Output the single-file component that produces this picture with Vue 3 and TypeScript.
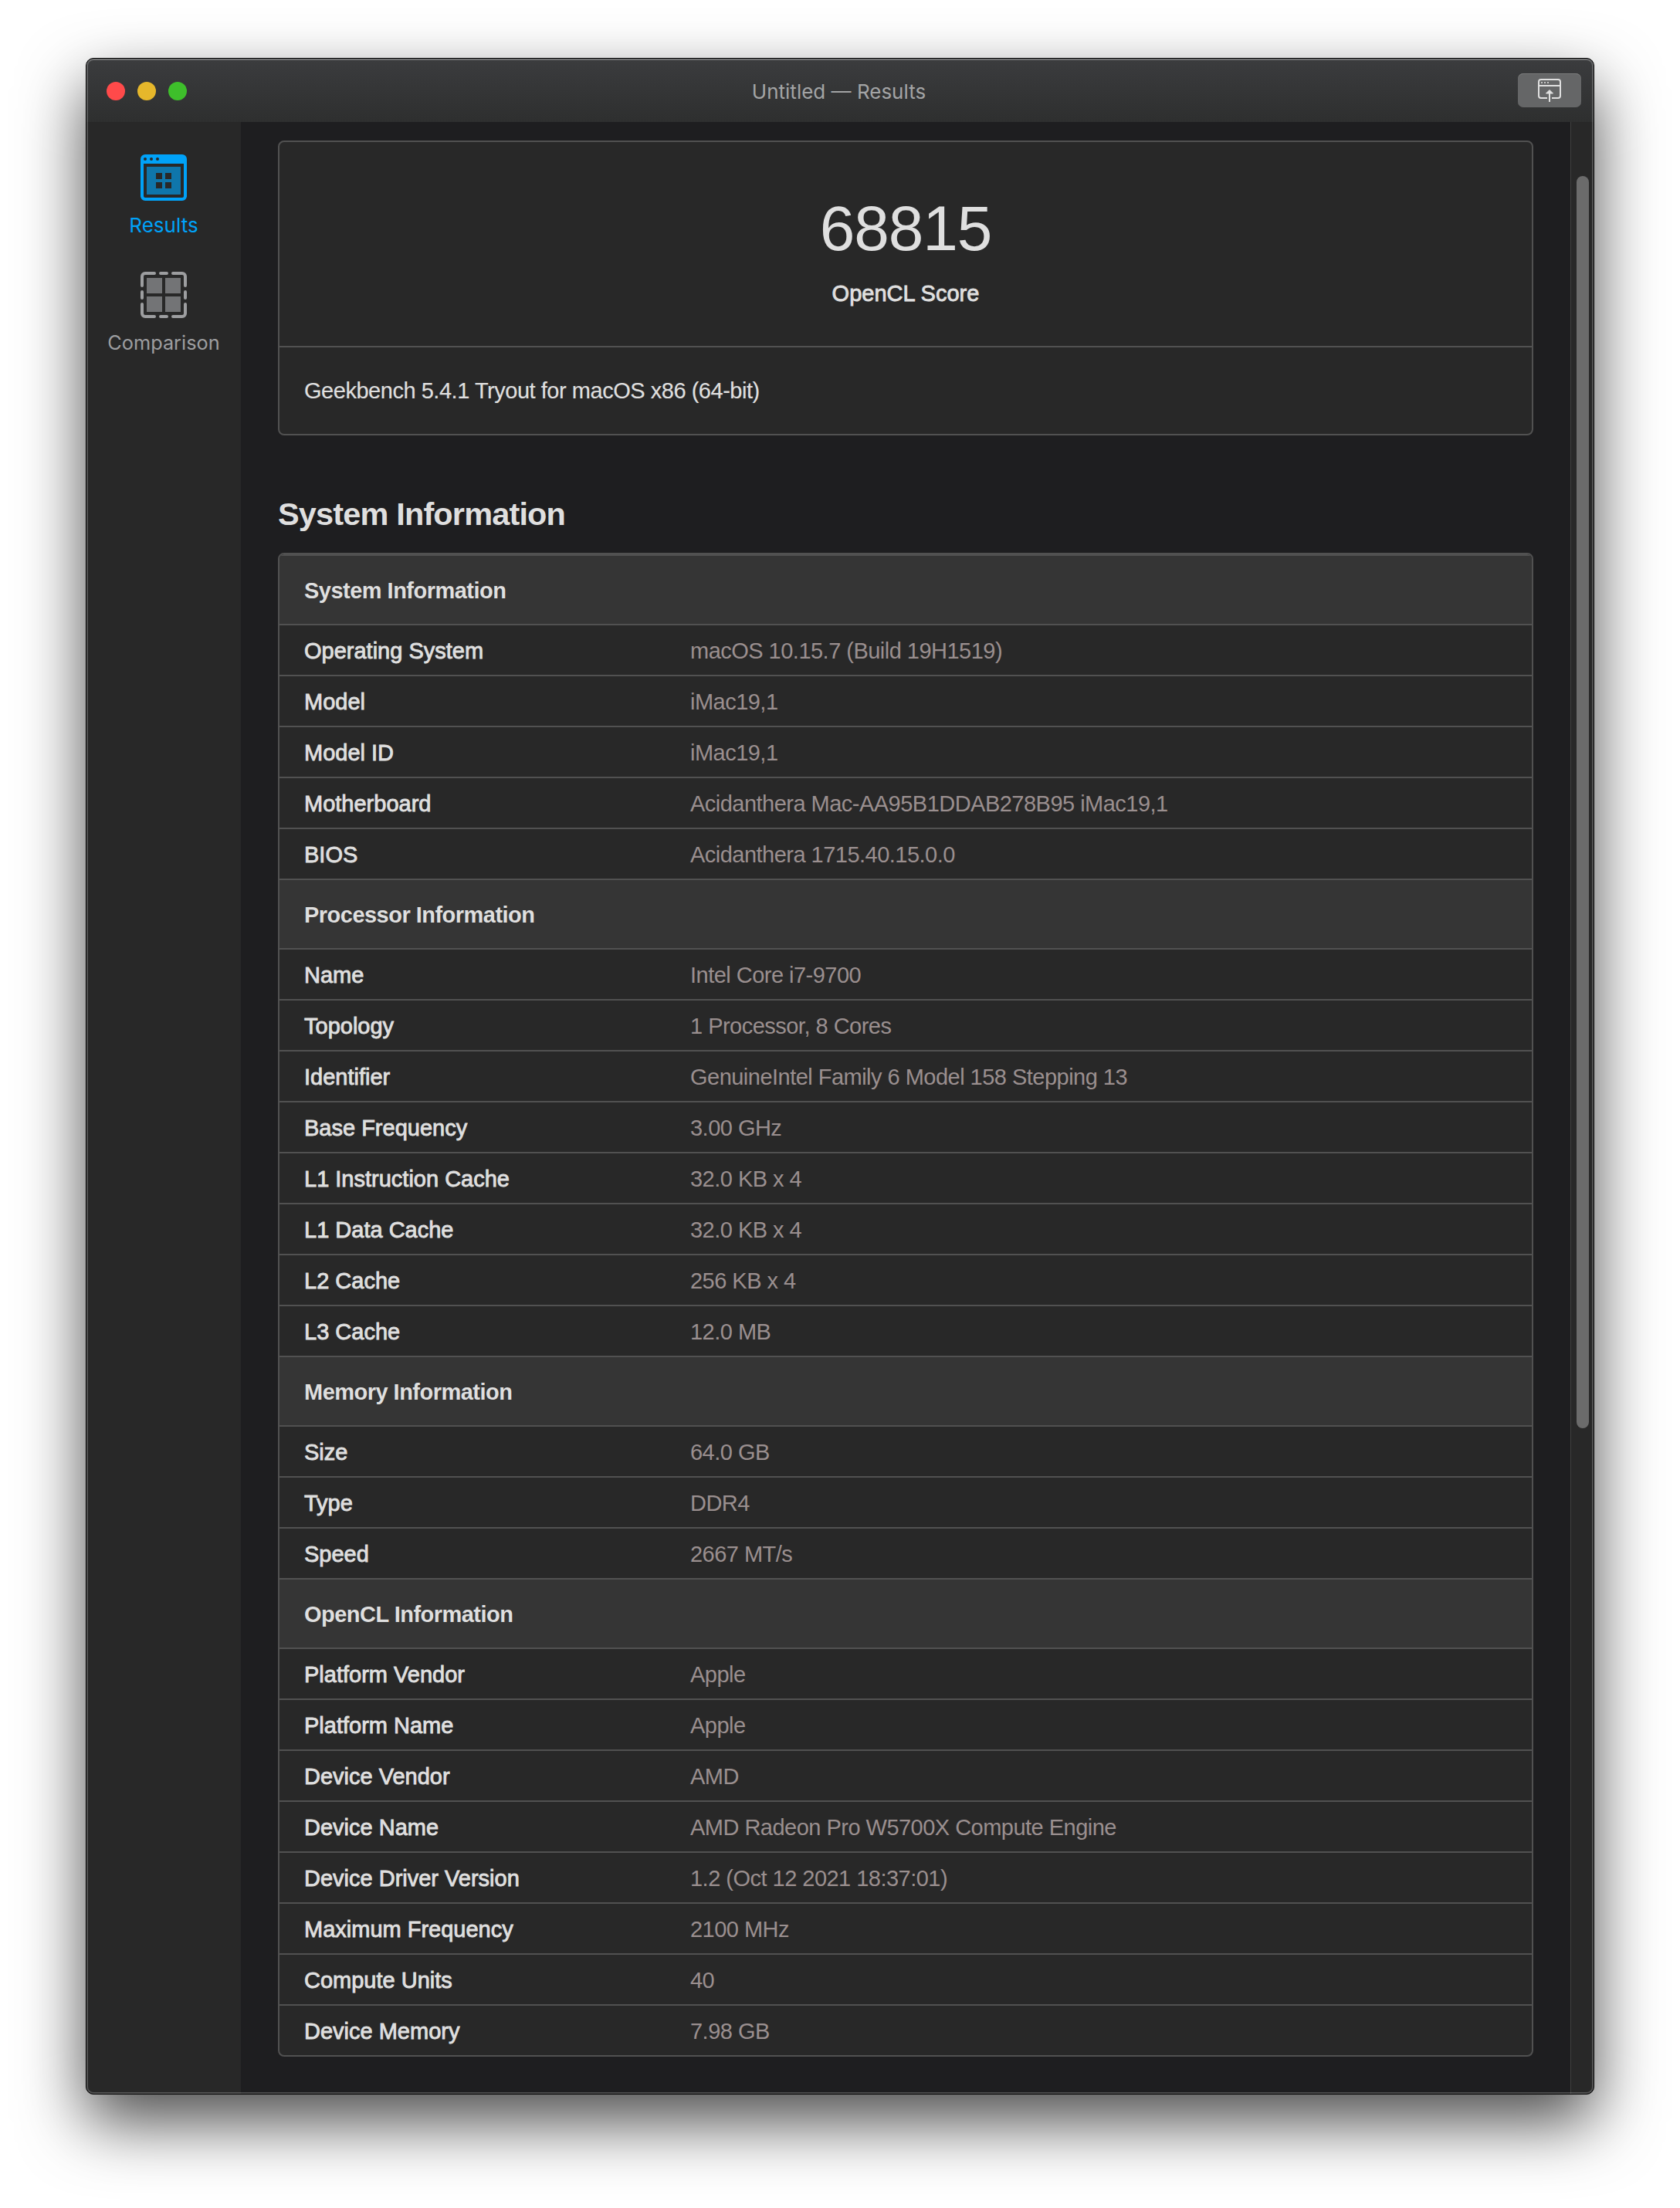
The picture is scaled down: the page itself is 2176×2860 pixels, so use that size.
<script setup lang="ts">
interface Row { label: string; value: string }
interface Group { title: string; rows: Row[] }

const groups: Group[] = [
  {
    title: 'System Information',
    rows: [
      { label: 'Operating System', value: 'macOS 10.15.7 (Build 19H1519)' },
      { label: 'Model', value: 'iMac19,1' },
      { label: 'Model ID', value: 'iMac19,1' },
      { label: 'Motherboard', value: 'Acidanthera Mac-AA95B1DDAB278B95 iMac19,1' },
      { label: 'BIOS', value: 'Acidanthera 1715.40.15.0.0' },
    ],
  },
  {
    title: 'Processor Information',
    rows: [
      { label: 'Name', value: 'Intel Core i7-9700' },
      { label: 'Topology', value: '1 Processor, 8 Cores' },
      { label: 'Identifier', value: 'GenuineIntel Family 6 Model 158 Stepping 13' },
      { label: 'Base Frequency', value: '3.00 GHz' },
      { label: 'L1 Instruction Cache', value: '32.0 KB x 4' },
      { label: 'L1 Data Cache', value: '32.0 KB x 4' },
      { label: 'L2 Cache', value: '256 KB x 4' },
      { label: 'L3 Cache', value: '12.0 MB' },
    ],
  },
  {
    title: 'Memory Information',
    rows: [
      { label: 'Size', value: '64.0 GB' },
      { label: 'Type', value: 'DDR4' },
      { label: 'Speed', value: '2667 MT/s' },
    ],
  },
  {
    title: 'OpenCL Information',
    rows: [
      { label: 'Platform Vendor', value: 'Apple' },
      { label: 'Platform Name', value: 'Apple' },
      { label: 'Device Vendor', value: 'AMD' },
      { label: 'Device Name', value: 'AMD Radeon Pro W5700X Compute Engine' },
      { label: 'Device Driver Version', value: '1.2 (Oct 12 2021 18:37:01)' },
      { label: 'Maximum Frequency', value: '2100 MHz' },
      { label: 'Compute Units', value: '40' },
      { label: 'Device Memory', value: '7.98 GB' },
    ],
  },
]
</script>

<template>
  <div class="desktop">
    <div class="window">
      <header class="titlebar">
        <div class="lights">
          <span class="light close"></span>
          <span class="light minimize"></span>
          <span class="light zoom"></span>
        </div>
        <div class="title">Untitled — Results</div>
        <div class="actions">
          <button class="share" type="button" aria-label="Upload">
            <svg width="30" height="30" viewBox="0 0 30 30" fill="none">
              <path d="M12 25H4a3 3 0 0 1-3-3V4a3 3 0 0 1 3-3h22a3 3 0 0 1 3 3v18a3 3 0 0 1-3 3h-8" stroke="#e0e0e0" stroke-width="2" />
              <path d="M1 9h28M15 18v12" stroke="#e0e0e0" stroke-width="2" />
              <path d="M4 4h2v2H4zM8 4h2v2H8zM12 4h2v2h-2z" fill="#c4c4c4" />
              <path d="M15 14.500l4.500 4.500h-9z" fill="#e0e0e0" stroke="#e0e0e0" stroke-width="1" stroke-linejoin="round" />
            </svg>
          </button>
        </div>
      </header>

      <div class="body">
        <nav class="sidebar">
          <a class="tab active">
            <svg width="60" height="60" viewBox="0 0 60 60">
              <path fill="#00a2f8" fill-rule="evenodd" d="M6 0h48a6 6 0 0 1 6 6v48a6 6 0 0 1-6 6H6a6 6 0 0 1-6-6V6a6 6 0 0 1 6-6zM4 12v42a2 2 0 0 0 2 2h48a2 2 0 0 0 2-2V12z" />
              <g fill="#282828">
                <circle cx="6" cy="6" r="2" /><circle cx="14" cy="6" r="2" /><circle cx="22" cy="6" r="2" />
              </g>
              <path fill="#0f76ab" fill-rule="evenodd" d="M8 16h44v36H8zM20 24v8h8v-8zM32 24v8h8v-8zM20 36v8h8v-8zM32 36v8h8v-8z" />
            </svg>
            <span class="tab-label results">Results</span>
          </a>
          <a class="tab">
            <svg width="60" height="60" viewBox="0 0 60 60">
              <path fill="none" stroke="#9d9ea0" stroke-width="4" stroke-linecap="round" d="M2 18V6a4 4 0 0 1 4-4h12M26 2h8M42 2h12a4 4 0 0 1 4 4v12M58 26v8M58 42v12a4 4 0 0 1-4 4H42M34 58h-8M18 58H6a4 4 0 0 1-4-4V42M2 34v-8" />
              <path fill="#737476" d="M8 8h20v20H8zM32 8h20v20H32zM8 32h20v20H8zM32 32h20v20H32z" />
            </svg>
            <span class="tab-label">Comparison</span>
          </a>
        </nav>

        <main class="content">
          <section class="card">
            <div class="score">
              <div class="score-value">68815</div>
              <div class="score-label">OpenCL Score</div>
            </div>
            <div class="version">Geekbench 5.4.1 Tryout for macOS x86 (64-bit)</div>
          </section>

          <h2 class="heading">System Information</h2>

          <section class="card">
            <template v-for="group in groups" :key="group.title">
              <div class="group">{{ group.title }}</div>
              <div v-for="row in group.rows" :key="row.label" class="row">
                <span class="label">{{ row.label }}</span>
                <span class="value">{{ row.value }}</span>
              </div>
            </template>
          </section>
        </main>

        <div class="scrollbar"><div class="thumb"></div></div>
      </div>
    </div>
  </div>
</template>

<style>
body {
  background: #fff;
}
</style>

<style scoped>
.desktop {
  box-sizing: border-box;
  width: 2176px;
  height: 2860px;
  padding: 75px 111px 147px;
  overflow: hidden;
  background: #fff;
  font-family: "Liberation Sans", Arial, sans-serif;
}
.window {
  position: relative;
  box-sizing: border-box;
  height: 2638px;
  border: 1px solid #000;
  border-radius: 10px;
  overflow: hidden;
  display: flex;
  flex-direction: column;
  background: #1e1e20;
  box-shadow: 0 36px 84px rgba(0, 0, 0, 0.7);
}
.window::after {
  content: "";
  position: absolute;
  inset: 0;
  border: 2px solid rgba(255, 255, 255, 0.2);
  border-top-color: rgba(255, 255, 255, 0.28);
  border-radius: 9px;
  pointer-events: none;
}
.titlebar {
  flex: none;
  height: 82px;
  box-sizing: border-box;
  padding: 2px 26px 0;
  display: grid;
  grid-template-columns: 1fr auto 1fr;
  align-items: center;
  background: linear-gradient(#3b3c3e, #2e2f2f);
}
.lights {
  display: flex;
  gap: 16px;
}
.light {
  width: 24px;
  height: 24px;
  border-radius: 50%;
}
.close { background: #ff4a4a; }
.minimize { background: #e6b72b; }
.zoom { background: #3ebf2b; }
.title {
  padding: 1px 3px 0 0;
  font-family: Inter, "Liberation Sans", sans-serif;
  font-size: 26px;
  line-height: 32px;
  color: #a3a4a5;
}
.actions {
  align-self: start;
  margin: 17px -10px 0 0;
  display: flex;
  justify-content: flex-end;
}
.share {
  width: 82px;
  height: 44px;
  padding: 7px 0 0;
  border: 0;
  border-radius: 7px;
  display: flex;
  justify-content: center;
  align-items: flex-start;
  background: #656667;
  box-shadow: inset 0 1px 0 #7b7c7c;
}
.share svg,
.tab svg {
  display: block;
}
.body {
  flex: 1;
  display: flex;
  min-height: 0;
}
.sidebar {
  width: 200px;
  box-sizing: border-box;
  padding-top: 42px;
  display: flex;
  flex-direction: column;
  gap: 36px;
  background: #282828;
}
.tab {
  height: 116px;
  display: flex;
  flex-direction: column;
  align-items: center;
  gap: 16px;
  color: #9d9ea0;
}
.tab.active {
  color: #00a2f8;
}
.tab-label {
  font-family: Inter, "Liberation Sans", sans-serif;
  font-size: 25.300px;
  line-height: 32px;
}
.results {
  font-size: 26px;
}
.content {
  width: 1722px;
  box-sizing: border-box;
  padding: 24px 48px 0;
}
.card {
  border: 2px solid #515151;
  border-radius: 8px;
  background: #282828;
  color: #dfdfdf;
  font-size: 29px;
  overflow: hidden;
}
.score {
  height: 264px;
  border-bottom: 2px solid #515151;
  display: flex;
  flex-direction: column;
  align-items: center;
}
.score-value {
  margin-top: 66px;
  font-size: 82px;
  line-height: 92px;
  letter-spacing: -1.100px;
}
.score-label {
  margin-top: 22px;
  line-height: 32px;
  -webkit-text-stroke: 0.9px currentColor;
}
.version {
  height: 112px;
  padding-left: 32px;
  line-height: 112px;
  letter-spacing: -0.470px;
  -webkit-text-stroke: 0.2px currentColor;
}
.heading {
  margin: 0;
  padding-top: 78px;
  height: 74px;
  font-size: 41.500px;
  line-height: 48px;
  font-weight: 700;
  letter-spacing: -0.850px;
  color: #dfdfdf;
}
.group {
  height: 88px;
  border-top: 2px solid #515151;
  padding-left: 32px;
  line-height: 90px;
  font-weight: 700;
  letter-spacing: -0.520px;
  background: #353535;
}
.row {
  height: 64px;
  border-top: 2px solid #515151;
  padding-left: 32px;
  display: flex;
  line-height: 66px;
}
.label {
  width: 500px;
  -webkit-text-stroke: 0.9px currentColor;
}
.value {
  letter-spacing: -0.520px;
  color: #9a8f8f;
}
.scrollbar {
  width: 30px;
  box-sizing: border-box;
  padding: 70px 0 0 7px;
  border-left: 1px solid #404040;
  background: #282828;
}
.thumb {
  width: 16px;
  height: 1622px;
  border-radius: 8px;
  background: #6b6b6b;
}
</style>
